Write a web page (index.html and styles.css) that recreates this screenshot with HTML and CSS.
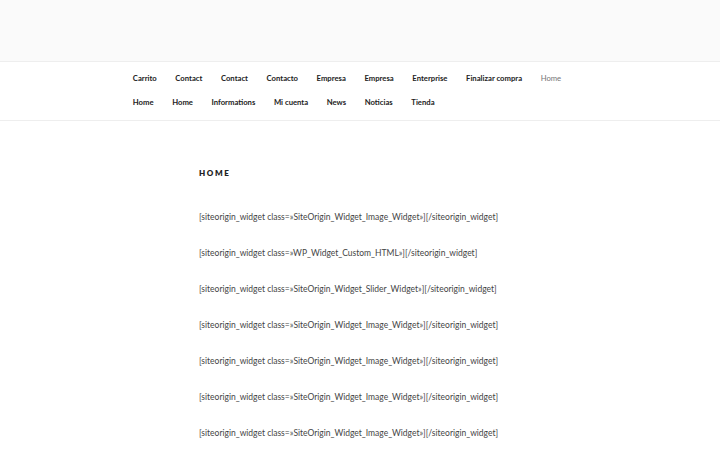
FILE: index.html
```html
<!DOCTYPE html>
<html lang="es">
<head>
<meta charset="utf-8">
<title>Home</title>
<link rel="stylesheet" href="styles.css">
</head>
<body>
<header class="masthead"></header>
<nav class="nav">
  <ul class="menu">
    <li><a>Carrito</a></li>
    <li><a>Contact</a></li>
    <li><a>Contact</a></li>
    <li><a>Contacto</a></li>
    <li><a>Empresa</a></li>
    <li><a>Empresa</a></li>
    <li><a>Enterprise</a></li>
    <li><a>Finalizar compra</a></li>
    <li class="current"><a>Home</a></li>
    <li><a>Home</a></li>
    <li><a>Home</a></li>
    <li><a>Informations</a></li>
    <li><a>Mi cuenta</a></li>
    <li><a>News</a></li>
    <li><a>Noticias</a></li>
    <li><a>Tienda</a></li>
  </ul>
</nav>
<main class="content">
  <h1 class="title">Home</h1>
  <p>[siteorigin_widget class=»SiteOrigin_Widget_Image_Widget»][/siteorigin_widget]</p>
  <p>[siteorigin_widget class=»WP_Widget_Custom_HTML»][/siteorigin_widget]</p>
  <p>[siteorigin_widget class=»SiteOrigin_Widget_Slider_Widget»][/siteorigin_widget]</p>
  <p>[siteorigin_widget class=»SiteOrigin_Widget_Image_Widget»][/siteorigin_widget]</p>
  <p>[siteorigin_widget class=»SiteOrigin_Widget_Image_Widget»][/siteorigin_widget]</p>
  <p>[siteorigin_widget class=»SiteOrigin_Widget_Image_Widget»][/siteorigin_widget]</p>
  <p>[siteorigin_widget class=»SiteOrigin_Widget_Image_Widget»][/siteorigin_widget]</p>
</main>
</body>
</html>
```
FILE: styles.css
```css
html, body {
  margin: 0;
  padding: 0;
  background: #fff;
  font-family: Lato, "Liberation Sans", sans-serif;
}
.masthead {
  height: 61px;
  background: #fafafa;
}
.nav {
  border-top: 1px solid #eee;
  border-bottom: 1px solid #eee;
  padding: 4px 123px 6px 123.5px;
}
.menu {
  list-style: none;
  margin: 0;
  padding: 0;
  display: flex;
  flex-wrap: wrap;
}
.menu li a {
  display: block;
  padding: 0 9.3px;
  line-height: 24px;
  font-size: 7.7px;
  font-weight: 700;
  color: #222;
}
.menu li.current a {
  color: #767676;
  font-weight: 400;
}
.content {
  padding: 46px 199px 0 199px;
}
.title {
  margin: 0 0 32px 0;
  font-size: 8px;
  font-weight: 800;
  letter-spacing: 1.6px;
  text-transform: uppercase;
  color: #222;
  line-height: 12px;
}
.content p {
  margin: 0 0 24px 0;
  font-size: 8.5px;
  line-height: 12px;
  color: #444;
  white-space: nowrap;
}
```
